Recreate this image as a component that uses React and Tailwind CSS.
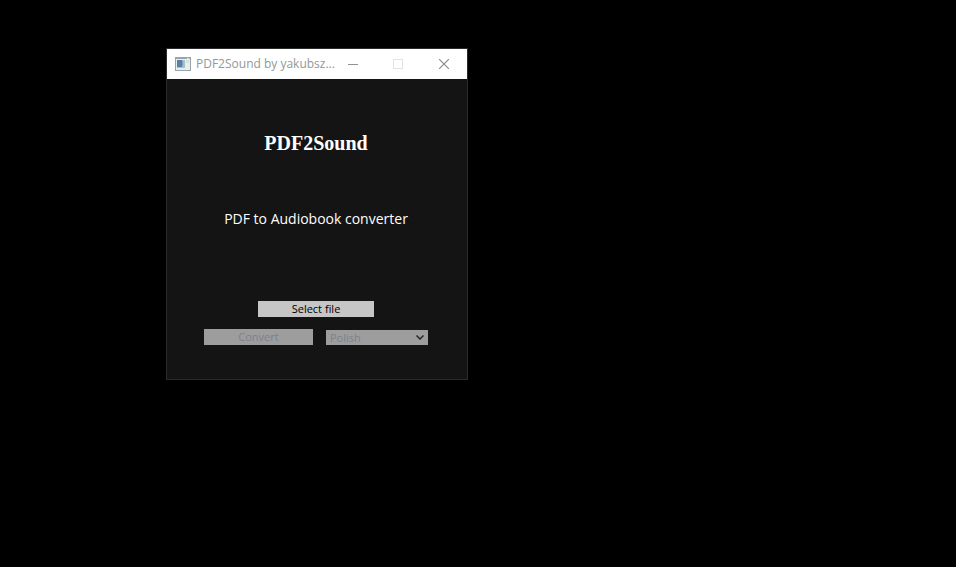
function AppIcon() {
  return (
    <svg width="16" height="14" viewBox="0 0 16 14" shapeRendering="crispEdges" aria-hidden="true">
      <rect width="16" height="14" fill="#9ba5a9" />
      <rect x="1" y="2" width="14" height="11" fill="#e8efef" />
      <rect x="2" y="3" width="8" height="8" fill="#a5c0cf" />
      <rect x="2" y="3" width="5" height="7" fill="#5681a8" />
      <rect x="7" y="4" width="1" height="5" fill="#7ba0b8" />
      <rect x="11" y="3" width="3" height="3" fill="#d5e1df" />
      <rect x="12" y="1" width="2" height="1" fill="#dce3e3" />
    </svg>
  );
}

function TitleBar() {
  return (
    <header className="flex h-[30px] items-center bg-white pb-px text-[#929897]">
      <div className="flex min-w-0 flex-1 items-center gap-[5px] pl-2">
        <span className="shrink-0">
          <AppIcon />
        </span>
        <h2 className="text-xs whitespace-nowrap">PDF2Sound by yakubsz...</h2>
      </div>
      <button type="button" aria-label="Minimize" className="flex h-full w-[45px] items-center justify-center">
        <svg width="10" height="10" viewBox="0 0 10 10" shapeRendering="crispEdges">
          <path d="M0 5.5H10" stroke="#929292" />
        </svg>
      </button>
      <button type="button" aria-label="Maximize" disabled className="flex h-full w-[46px] items-center justify-center">
        <svg width="10" height="10" viewBox="0 0 10 10" shapeRendering="crispEdges">
          <rect x="0.5" y="0.5" width="9" height="9" fill="none" stroke="#dce6e8" />
        </svg>
      </button>
      <button type="button" aria-label="Close" className="flex h-full w-[46px] items-center justify-center">
        <svg width="10" height="10" viewBox="0 0 10 10">
          <path d="M0 0L10 10M10 0L0 10" stroke="#858b8b" strokeWidth="1.1" />
        </svg>
      </button>
    </header>
  );
}

export default function App() {
  return (
    <div className="min-h-screen bg-black pt-12 pl-[166px] font-['Open_Sans',sans-serif]">
      <section className="w-full max-w-[302px] border border-[#2b2b2b] bg-[#141414]">
        <TitleBar />
        <main className="flex flex-col items-center pr-0.5 pb-[34px]">
          <h1 className="mt-12 font-['Liberation_Serif',serif] text-xl leading-8 font-bold text-white">PDF2Sound</h1>
          <p className="mt-12 text-sm leading-6 text-white">PDF to Audiobook converter</p>
          <button type="button" className="mt-[70px] h-4 w-[116px] bg-[#c6c6c6] text-[11px] leading-4 text-black">
            Select file
          </button>
          <div className="mt-3 flex items-end gap-[13px]">
            <button type="button" disabled className="h-4 w-[109px] bg-[#9d9d9d] text-[11px] leading-4 text-[#7b818f]">
              Convert
            </button>
            <div className="relative w-[102px]">
              <select
                aria-label="Language"
                disabled
                className="block h-[15px] w-full appearance-none bg-[#9d9d9d] pl-1 text-[11px] leading-[15px] text-[#7b818f] opacity-100"
              >
                <option>Polish</option>
              </select>
              <svg
                className="pointer-events-none absolute top-[5px] right-1"
                width="8"
                height="5"
                viewBox="0 0 8 5"
                aria-hidden="true"
              >
                <path d="M0.5 0.5L4 4L7.5 0.5" fill="none" stroke="#252530" strokeWidth="1.5" />
              </svg>
            </div>
          </div>
        </main>
      </section>
    </div>
  );
}
